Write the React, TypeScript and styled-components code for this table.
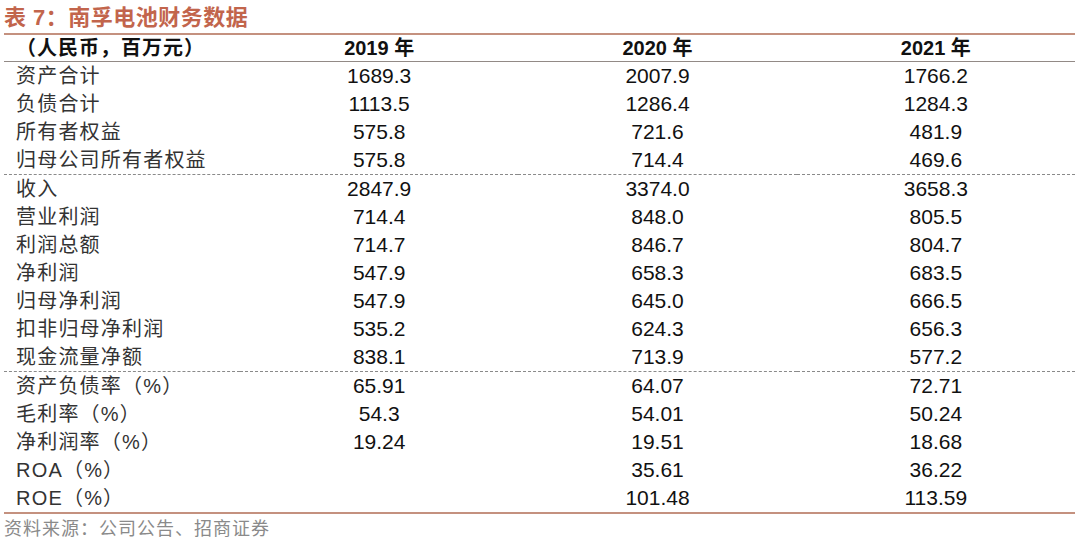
import { Fragment } from 'react';
import styled, { createGlobalStyle } from 'styled-components';

const GlobalStyle = createGlobalStyle`
  html, body {
    margin: 0;
    padding: 0;
    background: #ffffff;
  }
  body {
    font-family: "Liberation Sans", "Noto Sans CJK SC", sans-serif;
  }
`;

const Page = styled.div`
  width: 1080px;
  height: 548px;
  padding: 0 5px 0 4px;
  box-sizing: border-box;
  overflow: hidden;
`;

const Title = styled.div`
  height: 33px;
  line-height: 36px;
  font-size: 22px;
  font-weight: 700;
  letter-spacing: 0.5px;
  color: #c2654c;
  white-space: nowrap;
`;

const Table = styled.table`
  width: 100%;
  border-collapse: collapse;
  table-layout: fixed;
  border-top: 2px solid #c4917f;
  border-bottom: 2px solid #c4917f;
`;

const HeadRow = styled.tr`
  height: 26px;
  border-bottom: 1px solid #928a86;
`;

const HeadCell = styled.th<{ $label?: boolean }>`
  padding: 0 0 0 ${({ $label }) => ($label ? '12px' : '0')};
  height: 26px;
  line-height: 22px;
  text-align: ${({ $label }) => ($label ? 'left' : 'center')};
  font-size: 20px;
  font-weight: 700;
  letter-spacing: ${({ $label }) => ($label ? '1px' : '0')};
  color: #111;
  white-space: nowrap;
`;

const Row = styled.tr<{ $groupStart?: boolean }>`
  height: 28px;
  border-top: ${({ $groupStart }) => ($groupStart ? '1px dashed #8a8a8a' : 'none')};
`;

const Label = styled.td`
  padding: 0 0 0 12px;
  height: 28px;
  line-height: 22px;
  font-size: 20px;
  letter-spacing: 1.2px;
  color: #333;
  white-space: nowrap;
`;

const Value = styled.td`
  padding: 0;
  height: 28px;
  line-height: 22px;
  text-align: center;
  font-size: 21px;
  color: #111;
`;

const Source = styled.div`
  height: 30px;
  line-height: 30px;
  font-size: 18px;
  color: #8a8a8a;
  letter-spacing: 1px;
`;

interface DataRow {
  label: string;
  values: string[];
}

const groups: DataRow[][] = [
  [
    { label: '资产合计', values: ['1689.3', '2007.9', '1766.2'] },
    { label: '负债合计', values: ['1113.5', '1286.4', '1284.3'] },
    { label: '所有者权益', values: ['575.8', '721.6', '481.9'] },
    { label: '归母公司所有者权益', values: ['575.8', '714.4', '469.6'] },
  ],
  [
    { label: '收入', values: ['2847.9', '3374.0', '3658.3'] },
    { label: '营业利润', values: ['714.4', '848.0', '805.5'] },
    { label: '利润总额', values: ['714.7', '846.7', '804.7'] },
    { label: '净利润', values: ['547.9', '658.3', '683.5'] },
    { label: '归母净利润', values: ['547.9', '645.0', '666.5'] },
    { label: '扣非归母净利润', values: ['535.2', '624.3', '656.3'] },
    { label: '现金流量净额', values: ['838.1', '713.9', '577.2'] },
  ],
  [
    { label: '资产负债率（%）', values: ['65.91', '64.07', '72.71'] },
    { label: '毛利率（%）', values: ['54.3', '54.01', '50.24'] },
    { label: '净利润率（%）', values: ['19.24', '19.51', '18.68'] },
    { label: 'ROA（%）', values: ['', '35.61', '36.22'] },
    { label: 'ROE（%）', values: ['', '101.48', '113.59'] },
  ],
];

const years = ['2019 年', '2020 年', '2021 年'];

export default function App() {
  return (
    <Page>
      <GlobalStyle />
      <Title>表 7：南孚电池财务数据</Title>
      <Table>
        <colgroup>
          <col style={{ width: '236px' }} />
          <col />
          <col />
          <col />
        </colgroup>
        <thead>
          <HeadRow>
            <HeadCell $label>（人民币，百万元）</HeadCell>
            {years.map((year) => (
              <HeadCell key={year}>{year}</HeadCell>
            ))}
          </HeadRow>
        </thead>
        <tbody>
          {groups.map((group, gi) => (
            <Fragment key={gi}>
              {group.map((row, ri) => (
                <Row key={row.label} $groupStart={gi > 0 && ri === 0}>
                  <Label>{row.label}</Label>
                  {row.values.map((value, vi) => (
                    <Value key={vi}>{value}</Value>
                  ))}
                </Row>
              ))}
            </Fragment>
          ))}
        </tbody>
      </Table>
      <Source>资料来源：公司公告、招商证券</Source>
    </Page>
  );
}
